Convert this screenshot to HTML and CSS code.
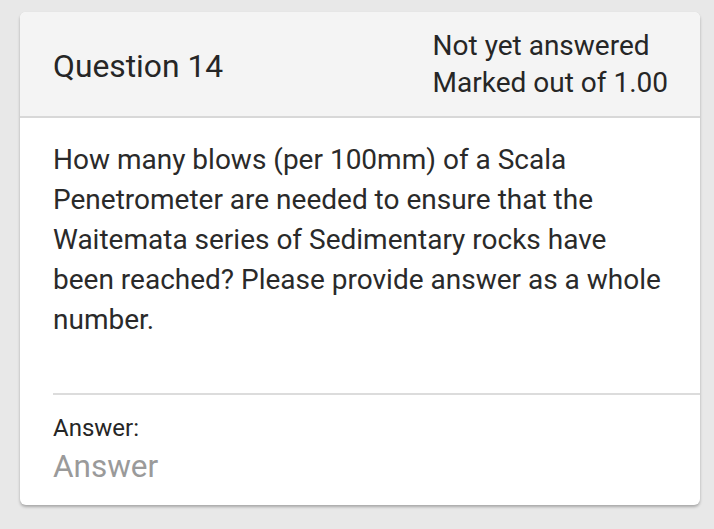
FILE: index.html
```html
<!DOCTYPE html>
<html>
<head>
<meta charset="utf-8">
<link rel="stylesheet" href="styles.css">
</head>
<body>
<div class="card">
  <div class="card-header">
    <div class="qno">Question 14</div>
    <div class="status">
      <div>Not yet answered</div>
      <div>Marked out of 1.00</div>
    </div>
  </div>
  <div class="card-body">
    <p class="qtext">How many blows (per 100mm) of a Scala Penetrometer are needed to ensure that the Waitemata series of Sedimentary rocks have been reached? Please provide answer as a whole number.</p>
    <div class="answer">
      <div class="answer-label">Answer:</div>
      <div class="answer-input">Answer</div>
    </div>
  </div>
</div>
</body>
</html>
```
FILE: styles.css
```css
html, body {
  margin: 0;
  padding: 0;
  background: #e8e8e8;
  font-family: Roboto, "Noto Sans", sans-serif;
  color: #262626;
}
body {
  padding: 12px 14px 24px 20px;
}
.card {
  background: #fff;
  border-radius: 6px;
  box-shadow: 0 2px 3px rgba(0,0,0,0.28);
  overflow: hidden;
}
.card-header {
  background: #f4f4f4;
  border-bottom: 2px solid #d8d8d8;
  box-sizing: border-box;
  height: 106px;
  display: flex;
  align-items: center;
  justify-content: space-between;
  padding: 0 32px 0 33px;
}
.qno {
  font-size: 31.8px;
  padding-top: 4px;
}
.status {
  font-size: 28px;
  line-height: 37px;
}
.card-body {
  padding: 22px 0 0 33px;
}
.qtext {
  margin: 0;
  padding-right: 36px;
  font-size: 28px;
  line-height: 40px;
  color: #2a2a2a;
}
.answer {
  margin-top: 53px;
  border-top: 2px solid #dcdcdc;
  padding: 18px 0 18px 0;
}
.answer-label {
  font-size: 24px;
  line-height: 30px;
}
.answer-input {
  font-size: 31.5px;
  line-height: 40px;
  margin-top: 4px;
  color: #9a9a9a;
}
```
